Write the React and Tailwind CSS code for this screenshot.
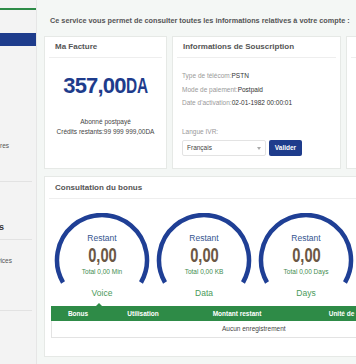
import React from 'react'

const font = { fontFamily: '"Liberation Sans", Arial, sans-serif' }

function Gauge({ total, label }) {
  return (
    <div className="w-[102px] flex flex-col items-center">
      <div className="relative w-[102px] h-[76px]">
        <svg className="absolute inset-0" width="102" height="76" viewBox="0 0 102 76">
          <path
            d="M 12.03 69.5 A 45 45 0 1 1 89.97 69.5"
            fill="none"
            stroke="#1f3f95"
            strokeWidth="4.5"
          />
        </svg>
        <div className="relative flex flex-col items-center pt-[20px]">
          <p className="text-[8.5px] leading-[10px] text-[#34558f]">Restant</p>
          <p className="mt-[2px] text-[21px] leading-[20px] font-black text-[#6b5744] scale-x-[0.7]">0,00</p>
          <p className="mt-[3px] text-[6.5px] leading-[8px] text-[#3f8c50]">{total}</p>
        </div>
      </div>
      <p className="mt-[-1px] text-[8.5px] leading-[10px] text-[#4a9a5a]">{label}</p>
    </div>
  )
}

export default function App() {
  return (
    <div style={font} className="w-[356px] h-[364px] overflow-hidden flex bg-[#f4f7f5]">
      {/* sidebar */}
      <aside className="w-[37px] shrink-0 bg-[#f3f3f3] border-r border-[#e6e6e6] overflow-hidden">
        <div className="mt-[8px] h-[2px] bg-[#2e8b47]" />
        <div className="mt-[23px] h-[13px] bg-[#1e3c8c]" />
        <div className="mt-[96px] -ml-[62px] w-[71px] text-right text-[6.5px] leading-[8px] text-[#555] whitespace-nowrap">
          Tonalités sonores
        </div>
        <div className="mt-[31px] mr-[4px] h-px bg-[#e2e2e2]" />
        <div className="mt-[40px] -ml-[60px] w-[64px] text-right text-[9px] leading-[10px] font-bold text-[#333] whitespace-nowrap">
          Mes Services
        </div>
        <div className="mt-[7px] mr-[4px] h-px bg-[#e2e2e2]" />
        <div className="mt-[17px] -ml-[60px] w-[72px] text-right text-[6.5px] leading-[8px] text-[#555] whitespace-nowrap">
          Mes services
        </div>
        <div className="mt-[45px] mr-[4px] h-px bg-[#e2e2e2]" />
      </aside>

      {/* main */}
      <main className="flex-1 min-w-0 pl-[7px] overflow-hidden">
        <p className="pt-[16px] pl-[6px] h-[36px] text-[7.3px] leading-[9px] font-bold text-[#555] whitespace-nowrap">
          Ce service vous permet de consulter toutes les informations relatives à votre compte :
        </p>

        <div className="flex gap-[5px] h-[133px]">
          {/* Ma facture */}
          <section className="w-[123px] shrink-0 bg-white border border-[#e6e9e6] flex flex-col">
            <div className="mx-[4px] h-[21px] border-b border-[#eeeeee] pl-[6px] flex items-center">
              <h2 className="text-[8px] font-bold text-[#555]">Ma Facture</h2>
            </div>
            <div className="mt-[17px] flex justify-center items-baseline text-[#1e3c8c] font-bold leading-[22px]">
              <span className="text-[22px] tracking-[-0.8px]">357,00</span>
              <span className="inline-block w-[22px] text-[22px]">
                <span className="inline-block origin-left scale-x-[0.7] font-black">DA</span>
              </span>
            </div>
            <div className="mt-[20px] text-center text-[6.5px] leading-[10px] text-[#444]">
              <p>Abonné postpayé</p>
              <p>Crédits restants:99 999 999,00DA</p>
            </div>
          </section>

          {/* Souscription */}
          <section className="w-[169px] shrink-0 bg-white border border-[#e6e9e6] flex flex-col">
            <div className="mx-[4px] h-[21px] border-b border-[#eeeeee] pl-[6px] flex items-center">
              <h2 className="text-[8px] font-bold text-[#555]">Informations de Souscription</h2>
            </div>
            <div className="pl-[9px] mt-[11px] text-[6.5px] leading-[13.5px] text-[#999]">
              <p>Type de télécom:<span className="text-[#333]">PSTN</span></p>
              <p>Mode de paiement:<span className="text-[#333]">Postpaid</span></p>
              <p>Date d'activation:<span className="text-[#333]">02-01-1982 00:00:01</span></p>
              <p className="mt-[15px]">Langue IVR:</p>
            </div>
            <div className="pl-[9px] mt-[2px] flex items-center gap-[3px]">
              <div className="w-[84px] h-[16px] border border-[#e3e3e3] rounded-[2px] flex items-center justify-between px-[4px]">
                <span className="text-[6.5px] text-[#444]">Français</span>
                <span className="w-0 h-0 border-l-[2.5px] border-r-[2.5px] border-t-[3px] border-l-transparent border-r-transparent border-t-[#aaa]" />
              </div>
              <button className="w-[33px] h-[16px] bg-[#1e3c8c] rounded-[2px] text-white text-[6.5px] font-bold">
                Valider
              </button>
            </div>
          </section>

          {/* third card (clipped) */}
          <section className="w-[120px] shrink-0 bg-white border border-[#e6e9e6]">
            <div className="mx-[4px] h-[21px] border-b border-[#eeeeee]" />
          </section>
        </div>

        {/* bonus */}
        <section className="mt-[7px] w-[420px] h-[181px] bg-white border border-[#e6e9e6] flex flex-col">
          <div className="mx-[4px] h-[22px] border-b border-[#eeeeee] pl-[6px] flex items-center">
            <h2 className="text-[8px] font-bold text-[#555]">Consultation du bonus</h2>
          </div>
          <div className="mt-[14px] pl-[6px] flex">
            <Gauge total="Total 0,00 Min" label="Voice" />
            <Gauge total="Total 0,00 KB" label="Data" />
            <Gauge total="Total 0,00 Days" label="Days" />
          </div>
          <div className="relative mt-[8px] ml-[6px] w-[410px]">
            <span className="absolute left-[45px] -top-[3px] w-0 h-0 border-l-[3px] border-r-[3px] border-b-[3px] border-l-transparent border-r-transparent border-b-[#2e8b47]" />
            <div className="h-[15px] bg-[#2e8b47] grid grid-cols-[54px_76px_112px_122px] items-center text-center text-white text-[6.5px] font-bold">
              <span>Bonus</span>
              <span>Utilisation</span>
              <span>Montant restant</span>
              <span>Unité de mesure</span>
            </div>
            <div className="h-[17px] border-l border-b border-[#e3e3e3] flex items-center">
              <span className="ml-[170px] text-[6.5px] text-[#444]">Aucun enregistrement</span>
            </div>
          </div>
        </section>
      </main>
    </div>
  )
}
